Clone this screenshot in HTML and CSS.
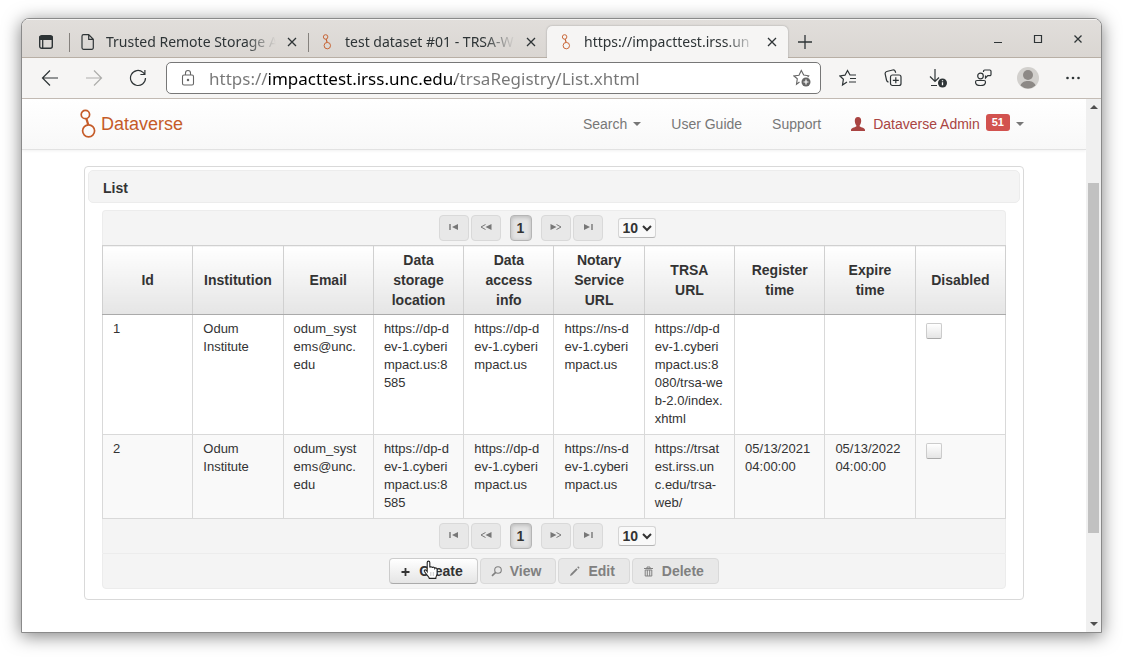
FILE: index.html
```html
<!DOCTYPE html>
<html lang="en">
<head>
<meta charset="utf-8">
<title>List - Dataverse</title>
<link rel="stylesheet" href="styles.css">
</head>
<body>
<svg class="defs" aria-hidden="true">
  <symbol id="dv" viewBox="0 0 16 30">
    <g fill="none" stroke="#c55b28" stroke-width="1.7"><circle cx="5.4" cy="5.5" r="4.2"/><circle cx="8.6" cy="21.8" r="6"/><path d="M6.4 9.6l1.8 6" stroke-width="2.2"/></g>
  </symbol>
  <symbol id="first" viewBox="0 0 12 8"><path d="M2 1v6" stroke="currentColor" stroke-width="1.4"/><path d="M10 1v6L4 4z" fill="currentColor"/></symbol>
  <symbol id="prev" viewBox="0 0 12 8"><path d="M5.500 1.500L1 4l4.500 2.500" fill="none" stroke="currentColor"/><path d="M11.500 1v6l-6-3z" fill="currentColor"/></symbol>
  <symbol id="next" viewBox="0 0 12 8"><path d="M6.500 1.500L11 4 6.500 6.500" fill="none" stroke="currentColor"/><path d="M.5 1v6l6-3z" fill="currentColor"/></symbol>
  <symbol id="last" viewBox="0 0 12 8"><path d="M10 1v6" stroke="currentColor" stroke-width="1.400"/><path d="M2 1v6l6-3z" fill="currentColor"/></symbol>
</svg>
<div class="window">
  <header class="tabbar">
    <button class="tab-menu" aria-label="Tab actions"><svg width="16" height="16" viewBox="0 0 16 16"><rect x="1.700" y="1.700" width="12.600" height="12.600" rx="2" fill="none" stroke="#2e3436" stroke-width="1.400"/><path d="M1.500 2h13v4h-13z" fill="#2e3436"/><path d="M4.700 5v9" stroke="#2e3436" stroke-width="1.300"/></svg></button>
    <div class="tab">
      <svg width="16" height="18" viewBox="0 0 16 18"><path d="M3.500 1.700h5.200l4.600 4.600v8.500a1.500 1.500 0 0 1-1.500 1.500H3.500A1.500 1.500 0 0 1 2 14.800V3.200a1.500 1.500 0 0 1 1.500-1.500zM8.700 1.700v4.600h4.600" fill="none" stroke="#2e3436" stroke-width="1.200"/></svg>
      <span class="tab-title">Trusted Remote Storage A</span>
      <button class="tab-close" aria-label="Close tab"><svg width="10" height="10" viewBox="0 0 10 10"><path d="M1 1l8 8M9 1L1 9" stroke="#2e3436" stroke-width="1.300"/></svg></button>
    </div>
    <div class="tab">
      <svg width="16" height="16"><use href="#dv"/></svg>
      <span class="tab-title">test dataset #01 - TRSA-W</span>
      <button class="tab-close" aria-label="Close tab"><svg width="10" height="10" viewBox="0 0 10 10"><path d="M1 1l8 8M9 1L1 9" stroke="#2e3436" stroke-width="1.300"/></svg></button>
    </div>
    <div class="tab tab-active">
      <svg width="16" height="16"><use href="#dv"/></svg>
      <span class="tab-title">https://impacttest.irss.un</span>
      <button class="tab-close" aria-label="Close tab"><svg width="10" height="10" viewBox="0 0 10 10"><path d="M1 1l8 8M9 1L1 9" stroke="#2e3436" stroke-width="1.300"/></svg></button>
    </div>
    <button class="new-tab" aria-label="New tab"><svg width="14" height="14" viewBox="0 0 14 14"><path d="M7 0v14M0 7h14" stroke="#2e3436" stroke-width="1.300"/></svg></button>
    <div class="win-controls">
      <button aria-label="Minimize"><svg width="10" height="10" viewBox="0 0 10 10"><path d="M1 8.500h8" stroke="#2e3436"/></svg></button>
      <button aria-label="Maximize"><svg width="10" height="10" viewBox="0 0 10 10"><path d="M1.500 1.500h7v7h-7z" fill="none" stroke="#2e3436" stroke-width="1.200"/></svg></button>
      <button aria-label="Close window"><svg width="10" height="10" viewBox="0 0 10 10"><path d="M1.500 1.500l7 7M8.500 1.500l-7 7" stroke="#2e3436" stroke-width="1.300"/></svg></button>
    </div>
  </header>

  <div class="toolbar">
    <button class="tool" aria-label="Back"><svg width="18" height="18" viewBox="0 0 18 18" fill="none" stroke="#2e3436" stroke-width="1.200"><path d="M17 9H1.500M9 1.500L1.500 9 9 16.500"/></svg></button>
    <button class="tool" aria-label="Forward" disabled><svg width="18" height="18" viewBox="0 0 18 18" fill="none" stroke="#adadab" stroke-width="1.200"><path d="M1 9h15.500M9 1.500L16.500 9 9 16.500"/></svg></button>
    <button class="tool" aria-label="Refresh"><svg width="18" height="18" viewBox="0 0 18 18" fill="none" stroke="#2e3436" stroke-width="1.200"><path d="M16.500 9A7.500 7.500 0 1 1 14 3.400l1.500 1.500M15.900 1v4.500h-4.500"/></svg></button>
    <div class="address">
      <svg width="14" height="18" viewBox="0 0 14 18" fill="none" stroke="#666" stroke-width="1.100"><rect x="1.500" y="6" width="11" height="10" rx="1.500"/><path d="M4.500 6V4a2.500 2.500 0 0 1 5 0v2"/><circle cx="7" cy="11" r=".7" fill="#666"/></svg>
      <input class="url" type="text" aria-label="Address" value="https://impacttest.irss.unc.edu/trsaRegistry/List.xhtml">
      <button class="star" aria-label="Add to favorites"><svg width="18" height="18" viewBox="0 0 18 18"><path d="M6.500 13L3.500 15.300l.8-5.600L1 7l5-.8 2.300-4.700L10.700 6l5 .8-1 1.300" fill="none" stroke="#666" stroke-width="1.100"/><circle cx="13" cy="13" r="4.500" fill="#666"/><path d="M13 10.500v5M10.500 13h5" stroke="#fff" stroke-width="1.200"/></svg></button>
    </div>
    <div class="tools">
      <button class="tool" aria-label="Favorites"><svg width="18" height="18" viewBox="0 0 18 18" fill="none" stroke="#2e3436" stroke-width="1.200"><path d="M8 13l-4.500 3 .9-5.800L1 7l5-.8L8.500 1.500 11 6h6M11 9.500h6M10 13h7"/></svg></button>
      <button class="tool" aria-label="Collections"><svg width="18" height="18" viewBox="0 0 18 18" fill="none" stroke="#2e3436" stroke-width="1.200"><rect x="6.500" y="6" width="10.500" height="10.500" rx="2"/><path d="M11.800 8.300v6M8.800 11.300h6M4.500 13.200c-1.200-.3-1.700-1-2-2.200L1.200 5.200C.9 3.700 1.400 2.900 2.700 2.500l6-1.500c1.300-.3 2.200.2 2.600 1.500l.4 1.300"/></svg></button>
      <button class="tool" aria-label="Downloads"><svg width="20" height="20" viewBox="0 0 20 20" fill="none" stroke="#2e3436" stroke-width="1.200"><path d="M7 1v12M2 8.500L7 13.500l4-4M3 17.500h6"/><circle cx="14.500" cy="15" r="4.500" fill="#2e3436" stroke="none"/><path d="M14.500 14.300v3M14.500 12.300v1" stroke="#fff" stroke-width="1.300"/></svg></button>
      <button class="tool" aria-label="Feedback"><svg width="18" height="18" viewBox="0 0 18 18" fill="none" stroke="#2e3436" stroke-width="1.200"><circle cx="6.500" cy="7" r="2.800"/><path d="M3 11.500h7c1 0 1.500.6 1.500 1.400 0 2.200-2 3.600-5 3.600s-5-1.400-5-3.600c0-.8.500-1.400 1.500-1.400zM9.500 3V2.200c0-.7.500-1.200 1.200-1.200h5.100c.7 0 1.200.5 1.200 1.200v3.300c0 .7-.5 1.200-1.200 1.200h-2L11.500 9V6.500"/></svg></button>
      <button class="tool" aria-label="Profile"><svg width="22" height="22" viewBox="0 0 22 22"><circle cx="11" cy="11" r="11" fill="#d2d0cd"/><circle cx="11" cy="8" r="5" fill="#8d8986"/><path d="M3.500 18.500c1-3.300 4-4.500 7.500-4.500s6.500 1.200 7.500 4.500A11 11 0 0 1 3.500 18.500z" fill="#8d8986"/></svg></button>
      <button class="tool" aria-label="More"><svg width="16" height="4" viewBox="0 0 16 4" fill="#2e3436"><circle cx="2.500" cy="2" r="1.300"/><circle cx="8" cy="2" r="1.300"/><circle cx="13.500" cy="2" r="1.300"/></svg></button>
    </div>
  </div>

  <div class="viewport">
    <div class="page">
      <nav class="navbar">
        <div class="container nav-inner">
          <a class="brand" href="#"><svg width="16" height="30"><use href="#dv"/></svg>Dataverse</a>
          <a class="nav-link" href="#">Search<span class="caret"></span></a>
          <a class="nav-link" href="#">User Guide</a>
          <a class="nav-link" href="#">Support</a>
          <a class="nav-link user" href="#"><svg width="14" height="14" viewBox="0 0 14 14"><path d="M7 0C4.800 0 3.800 1.500 3.800 3.700c0 1.800.6 3.600 1.500 4.500v1.300C3.500 10.400 0 11 0 13v1h14v-1c0-2-3.500-2.600-5.300-3.500V8.200c.9-.9 1.500-2.700 1.500-4.500C10.200 1.500 9.200 0 7 0z" fill="#a94442"/></svg><span>Dataverse Admin</span><span class="badge">51</span><span class="caret"></span></a>
        </div>
      </nav>
      <main class="container panel">
        <h1 class="panel-title">List</h1>
        <div class="datatable">
          <div class="paginator">
            <button class="pg" disabled aria-label="First page"><svg width="12" height="8"><use href="#first"/></svg></button>
            <button class="pg" disabled aria-label="Previous page"><svg width="12" height="8"><use href="#prev"/></svg></button>
            <button class="pg-current">1</button>
            <button class="pg" disabled aria-label="Next page"><svg width="12" height="8"><use href="#next"/></svg></button>
            <button class="pg" disabled aria-label="Last page"><svg width="12" height="8"><use href="#last"/></svg></button>
            <select class="rpp" aria-label="Rows per page"><option>10</option></select>
          </div>
          <table class="grid">
            <thead>
              <tr><th>Id</th><th>Institution</th><th>Email</th><th>Data storage location</th><th>Data access info</th><th>Notary Service URL</th><th>TRSA URL</th><th>Register time</th><th>Expire time</th><th>Disabled</th></tr>
            </thead>
            <tbody>
              <tr><td>1</td><td>Odum Institute</td><td>odum_syst<wbr>ems@unc.<wbr>edu</td><td>https://dp-d<wbr>ev-1.cyberi<wbr>mpact.us:8<wbr>585</td><td>https://dp-d<wbr>ev-1.cyberi<wbr>mpact.us</td><td>https://ns-d<wbr>ev-1.cyberi<wbr>mpact.us</td><td>https://dp-d<wbr>ev-1.cyberi<wbr>mpact.us:8<wbr>080/trsa-we<wbr>b-2.0/index.<wbr>xhtml</td><td></td><td></td><td><input type="checkbox" class="check" aria-label="Disabled, row 1"></td></tr>
              <tr><td>2</td><td>Odum Institute</td><td>odum_syst<wbr>ems@unc.<wbr>edu</td><td>https://dp-d<wbr>ev-1.cyberi<wbr>mpact.us:8<wbr>585</td><td>https://dp-d<wbr>ev-1.cyberi<wbr>mpact.us</td><td>https://ns-d<wbr>ev-1.cyberi<wbr>mpact.us</td><td>https://trsat<wbr>est.irss.un<wbr>c.edu/trsa-<wbr>web/</td><td>05/13/2021 04:00:00</td><td>05/13/2022 04:00:00</td><td><input type="checkbox" class="check" aria-label="Disabled, row 2"></td></tr>
            </tbody>
          </table>
          <div class="paginator paginator-bottom">
            <button class="pg" disabled aria-label="First page"><svg width="12" height="8"><use href="#first"/></svg></button>
            <button class="pg" disabled aria-label="Previous page"><svg width="12" height="8"><use href="#prev"/></svg></button>
            <button class="pg-current">1</button>
            <button class="pg" disabled aria-label="Next page"><svg width="12" height="8"><use href="#next"/></svg></button>
            <button class="pg" disabled aria-label="Last page"><svg width="12" height="8"><use href="#last"/></svg></button>
            <select class="rpp" aria-label="Rows per page"><option>10</option></select>
          </div>
          <div class="actions">
            <button class="btn btn-create"><svg width="12" height="12" viewBox="0 0 12 12"><path d="M5.500 3v8M1.500 7h8" stroke="currentColor" stroke-width="1.800"/></svg>Create
              <svg class="pointer" width="17" height="20" viewBox="0 0 17 20"><path d="M5.200 11.500V2.600c0-2 2.600-2 2.600 0v5c.2-1.300 2.400-1.200 2.500.3.500-1.200 2.400-.9 2.500.5.600-.9 2.300-.5 2.300 1v4c0 2-1.300 3-1.300 5H7.300c-.4-1.800-3.300-4-4.800-6.800-.9-1.800 1.200-2.600 2.700-.1z" fill="#fff" stroke="#222" stroke-width="1.100"/><path d="M8.800 12v4M11.300 12v4" stroke="#bbb" stroke-width=".8"/></svg>
            </button>
            <button class="btn" disabled><svg width="12" height="12" viewBox="0 0 12 12"><circle cx="7" cy="5" r="3.300" fill="none" stroke="currentColor" stroke-width="1.100"/><path d="M4.700 7.300L1 10.800" stroke="currentColor" stroke-width="1.600"/></svg>View</button>
            <button class="btn" disabled><svg width="12" height="12" viewBox="0 0 12 12"><path d="M1 11l.6-2.100 5.700-5.700 1.400 1.400L3 10.300z" fill="currentColor"/><path d="M8.200 2.300l1.400 1.400 1-1-1.400-1.400z" fill="currentColor"/></svg>Edit</button>
            <button class="btn" disabled><svg width="12" height="12" viewBox="0 0 12 12"><path d="M1 3.500h9M4 3V2h3v1M2.200 5v6h6.600V5zM4.300 5v6M6.700 5v6" fill="none" stroke="currentColor"/></svg>Delete</button>
          </div>
        </div>
      </main>
    </div>
    <div class="scrollbar" aria-hidden="true">
      <span class="arrow-up"></span>
      <span class="thumb"></span>
      <span class="arrow-down"></span>
    </div>
  </div>
</div>
</body>
</html>
```
FILE: styles.css
```css
* { box-sizing: border-box; }

body {
  margin: 0;
  min-height: 100vh;
  padding: 18px 21px 24px;
  display: flex;
  background: #fff;
  color: #333;
  font-family: "Liberation Sans", Arial, sans-serif;
  font-size: 14px;
  line-height: 20px;
}

button, select, input { font: inherit; color: inherit; margin: 0; }
button { border: 0; background: none; padding: 0; }
svg { display: block; flex: none; }
a { text-decoration: none; }
.defs { position: absolute; width: 0; height: 0; }

.window {
  flex: 1;
  min-width: 0;
  display: flex;
  flex-direction: column;
  border: 1px solid #8a8a8a;
  border-radius: 8px 8px 0 0;
  overflow: hidden;
  background: #fff;
  box-shadow: 0 3px 18px rgba(0, 0, 0, .5);
}

/* Tab strip */
.tabbar {
  display: flex;
  height: 39px;
  align-items: stretch;
  background: linear-gradient(#e1dedb, #dad6d2);
  box-shadow: inset 0 1px #f5f4f3, inset 0 -1px #b8afa5;
  font-family: "Noto Sans", "Open Sans", sans-serif;
  color: #2e3436;
}
.tab-menu { width: 47px; display: grid; place-items: center; padding-top: 7px; }
.tab {
  flex: 0 1 239px;
  min-width: 0;
  display: flex;
  align-items: center;
  gap: 10px;
  margin-top: 7px;
  padding: 0 10px 0 11px;
  position: relative;
}
.tab::before {
  content: "";
  position: absolute;
  left: 0;
  top: 7px;
  height: 19px;
  border-left: 1px solid #85817d;
}
.tab-active {
  flex-basis: 241px;
  background: #f6f5f4;
  border-radius: 5px 5px 0 0;
  box-shadow: 0 0 2px #999;
  clip-path: inset(-3px -3px 0 -3px);
}
.tab-active::before { display: none; }
.tab-title {
  flex: 1;
  overflow: hidden;
  white-space: nowrap;
  font-size: 14px;
  mask-image: linear-gradient(90deg, #000 82%, transparent);
}
.tab-close { width: 12px; height: 20px; display: grid; place-items: center; }
.new-tab { width: 34px; padding-top: 7px; display: grid; place-items: center; }
.win-controls { margin-left: auto; display: flex; padding-right: 3px; }
.win-controls button { width: 40px; display: grid; place-items: center; }

/* Address row */
.toolbar {
  display: flex;
  height: 41px;
  align-items: center;
  padding: 0 6px;
  background: #f6f5f4;
  border-bottom: 1px solid #c4bcb5;
}
.tool { width: 44px; height: 32px; display: grid; place-items: center; }
.address {
  flex: 1;
  min-width: 0;
  height: 32px;
  display: flex;
  align-items: center;
  gap: 14px;
  margin: 0 5px 0 6px;
  padding: 0 9px 0 14px;
  border: 1px solid #777;
  border-radius: 5px;
  background: #fff;
}
.url {
  flex: 1;
  min-width: 0;
  border: 0;
  padding: 0;
  height: 28px;
  outline: 0;
  font: 17px "Noto Sans", "Open Sans", sans-serif;
  color: transparent;
  background: linear-gradient(90deg, #767676 60px, #000 60px 246px, #767676 246px);
  background-clip: text;
}
.tools { display: flex; gap: 1px; }

/* Web page area */
.viewport { flex: 1; display: flex; min-height: 0; }
.page { flex: 1; min-width: 0; }
.container { width: 100%; max-width: 940px; margin: 0 auto; }
.navbar {
  background: linear-gradient(#fff, #f8f8f8);
  border-bottom: 1px solid #e2e2e2;
  box-shadow: 0 1px 3px rgba(0, 0, 0, .06);
}
.nav-inner { display: flex; align-items: center; gap: 30px; height: 50px; }
.brand {
  display: flex;
  align-items: center;
  gap: 5px;
  margin: 0 auto 0 -4px;
  color: #c55b28;
  font-size: 18px;
}
.nav-link { display: flex; align-items: center; color: #777; }
.caret {
  border: 4px solid transparent;
  border-top-color: #777;
  border-bottom: 0;
  margin-left: 6px;
}
.user { color: #a94442; }
.user svg { margin-right: 8px; }
.badge {
  margin-left: 6px;
  margin-bottom: 3px;
  padding: 0 6px;
  border-radius: 3px;
  background: #d2524f;
  color: #fff;
  font-size: 11px;
  font-weight: bold;
  line-height: 17px;
}

.panel {
  margin-top: 16px;
  padding: 3px;
  border: 1px solid #d9d9d9;
  border-radius: 4px;
}
.panel-title {
  margin: 0;
  padding: 7px 14px 4px;
  border: 1px solid #ececec;
  border-radius: 5px;
  background: #f4f4f4;
  font-size: 14px;
}
.datatable { margin: 7px 14px; }
.paginator, .actions {
  display: flex;
  justify-content: center;
  align-items: center;
  height: 35px;
  border: 1px solid #ececec;
  border-bottom: 0;
  background: #f4f4f4;
}
.paginator { gap: 2px; padding-right: 14px; border-radius: 4px 4px 0 0; }
.paginator-bottom { height: 34px; border-top: 0; border-radius: 0; }
.pg, .pg-current {
  height: 26px;
  border: 1px solid #d9d9d9;
  border-radius: 4px;
  background: #e8e8e8;
}
.pg { width: 30px; display: grid; place-items: center; padding-bottom: 3px; color: #777; }
.pg-current {
  width: 22px;
  margin: 0 7px;
  border-color: #b5b5b5;
  background: #e3e3e3;
  box-shadow: inset 0 1px 4px rgba(0, 0, 0, .2);
  font-weight: bold;
}
.rpp {
  width: 38px;
  height: 20px;
  margin-left: 13px;
  border: 1px solid #d5d5d5;
  border-bottom-color: #b5b5b5;
  border-radius: 3px;
  background: #f9f9f9;
  font-weight: bold;
}

.grid { width: 100%; table-layout: fixed; border-collapse: collapse; }
.grid th {
  height: 69px;
  padding: 4px 10px;
  border: 1px solid #d0d0d0;
  border-bottom-color: #aaa;
  background: linear-gradient(#fff, #e5e5e5);
}
.grid td {
  padding: 5px 0 6px 10px;
  border: 1px solid #d9d9d9;
  vertical-align: top;
  font-size: 13px;
  line-height: 18px;
}
.grid td:nth-child(2), .grid td:nth-child(8), .grid td:nth-child(9) { padding-right: 10px; }
.grid tbody tr:nth-child(even) { background: #f9f9f9; }
.check {
  appearance: none;
  display: block;
  width: 16px;
  height: 16px;
  margin-top: 3px;
  border: 1px solid #ccc;
  border-bottom-color: #aaa;
  border-radius: 2px;
  background: linear-gradient(#fff, #e5e5e5);
}

.actions { gap: 2px; height: 36px; border-bottom: 1px solid #ececec; border-radius: 0 0 4px 4px; }
.btn {
  position: relative;
  display: flex;
  align-items: center;
  gap: 7px;
  height: 26px;
  padding: 0 14px 0 10px;
  border: 1px solid #d9d9d9;
  border-radius: 4px;
  background: #e8e8e8;
  color: #808080;
  font-weight: bold;
}
.btn-create {
  border-color: #ccc;
  border-bottom-color: #aaa;
  background: linear-gradient(#fff, #e5e5e5);
  color: #333;
}
.pointer { position: absolute; left: 32px; top: 1px; }

/* Scrollbar */
.scrollbar {
  width: 15px;
  display: flex;
  flex-direction: column;
  align-items: center;
  padding: 6px 0;
  background: #f0f0f0;
}
.arrow-up { border: 4px solid transparent; border-top: 0; border-bottom-color: #505050; }
.arrow-down { border: 4px solid transparent; border-bottom: 0; border-top-color: #505050; }
.thumb { width: 11px; height: 350px; margin: 74px 0 auto; background: #c1c1c1; }
```
